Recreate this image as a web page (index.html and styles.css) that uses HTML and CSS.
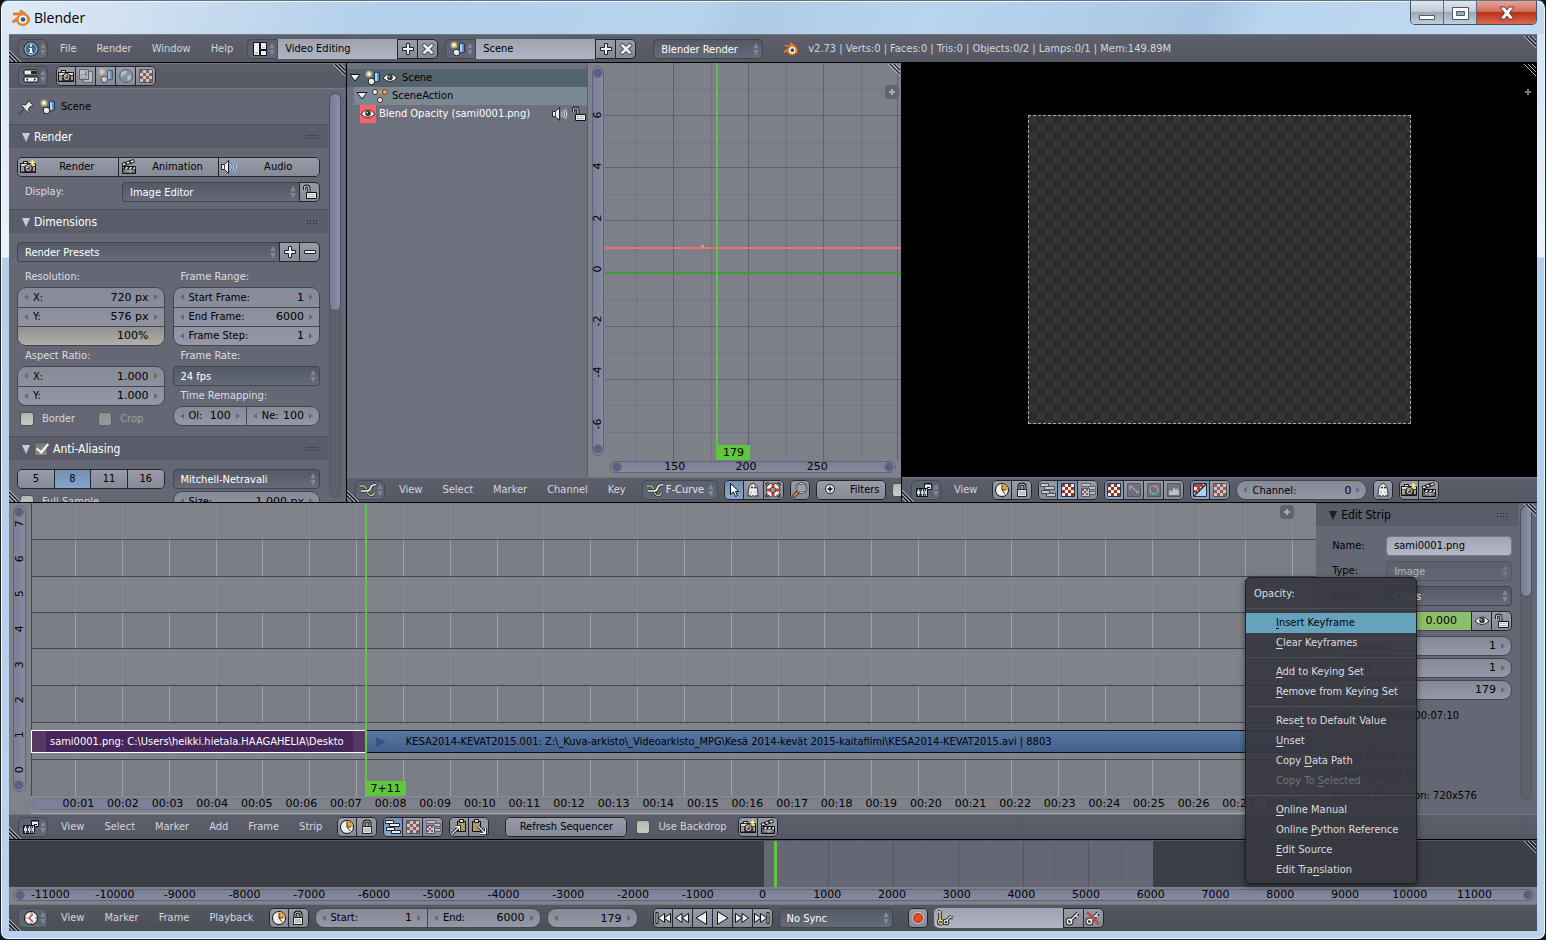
FILE: index.html
```html
<!DOCTYPE html>
<html lang="en">
<head>
<meta charset="utf-8">
<title>Blender</title>
<link rel="stylesheet" href="styles.css">
</head>
<body>
<svg class="defs" aria-hidden="true">
  <symbol id="ud" viewBox="0 0 8 16"><path d="M4 1L7 7H1zM4 15L1 9H7z" fill="#858996"/></symbol>
  <symbol id="plus" viewBox="0 0 16 16"><path d="M6.500 2.500h3v4h4v3h-4v4h-3v-4h-4v-3h4z" fill="#eee" stroke="#222"/></symbol>
  <symbol id="minus" viewBox="0 0 16 16"><path d="M2.500 6.500h11v3h-11z" fill="#eee" stroke="#222"/></symbol>
  <symbol id="cross" viewBox="0 0 16 16"><path d="M2 4.500L4.500 2 8 5.500 11.500 2 14 4.500 10.500 8l3.500 3.500-2.500 2.500L8 10.500 4.500 14 2 11.500 5.500 8z" fill="#eee" stroke="#222"/></symbol>
  <symbol id="info" viewBox="0 0 16 16"><circle cx="8" cy="8" r="7" fill="#456890" stroke="#111"/><circle cx="8" cy="8" r="6" fill="none" stroke="#c5d8ea"/><path d="M7 3.500h2v2H7zM6 7h3v4h1v1H6v-1h1V8H6z" fill="#fff"/></symbol>
  <symbol id="layout" viewBox="0 0 16 16"><path d="M1.500 1.500h6v13h-6zM8.500 1.500h6v7h-6zM8.500 9.500h6v5h-6z" fill="#eee" stroke="#111"/><path d="M3 11h3v2H3zM10 6h3v1h-3z" fill="#bbb"/></symbol>
  <symbol id="scene" viewBox="0 0 16 16"><circle cx="4" cy="4" r="3.500" fill="#e8e08a" opacity=".6"/><circle cx="4" cy="4" r="1.800" fill="#fffbd0"/><path d="M9.500 3l2.500-1 2.500 1v8l-2.500 1-2.500-1z" fill="#5a8fd0" stroke="#1d3350"/><path d="M10 3.500l2-.8v8.500l-2-.7z" fill="#b5d2f2"/><circle cx="6.500" cy="11.500" r="3.300" fill="#e4e4e4" stroke="#222"/><circle cx="5.500" cy="10.500" r="1.200" fill="#fff"/></symbol>
  <symbol id="blender" viewBox="0 0 20 16"><path d="M2 11.500L10 5H3.500V3h8L9.500 1.200 11.500 0l6.500 5.500C21.500 9.500 18.500 15.500 13 15.500c-4 0-6.300-2.500-6.300-5L3.500 13z" fill="#f0862a" stroke="#b85f18" stroke-width=".6"/><circle cx="12.800" cy="9.500" r="4" fill="#fff"/><circle cx="13" cy="9.500" r="2.300" fill="#265787"/></symbol>
  <symbol id="props" viewBox="0 0 16 16"><rect x="1" y="2" width="14" height="5" rx="1" fill="#eee" stroke="#111"/><path d="M8 3h6v3H8z" fill="#222"/><rect x="1" y="9" width="14" height="5" rx="1" fill="#eee" stroke="#111"/><path d="M3 11.500l2-1.500v3zM13 11.500l-2-1.500v3z" fill="#222"/></symbol>
  <symbol id="camera" viewBox="0 0 16 16"><path d="M.500 4.500h3v-2h4v2h8v9H.500z" fill="#3a3634" stroke="#111"/><path d="M1 5h14v2H1z" fill="#ddd"/><path d="M4 3h3v1H4z" fill="#eee"/><path d="M1 7.500h3v5H1zM13 8h2v4h-2z" fill="#a99e90"/><circle cx="8.500" cy="9" r="3.600" fill="#ccc" stroke="#111"/><circle cx="8.500" cy="9" r="2" fill="#5b3e42"/><circle cx="7.700" cy="8.300" r=".8" fill="#fff"/></symbol>
  <symbol id="render" viewBox="0 0 16 16"><use href="#camera"/><path d="M12.500 0l1 2.500L16 3.500l-2.500 1-1 3-1-3-2.500-1 2.500-1z" fill="#fff3a0" stroke="#d8b92c" stroke-width=".5"/></symbol>
  <symbol id="clapper" viewBox="0 0 16 16"><path d="M1.500 7.500h13v7h-13z" fill="#666" stroke="#111"/><path d="M2 8h12v2H2z" fill="#eee"/><path d="M3 8h2l-1 2H2zM7 8h2l-1 2H6zM11 8h2l-1 2h-2z" fill="#111"/><path d="M1 4.500L12.500.500l1 2.500L2 7z" fill="#eee" stroke="#111"/><path d="M4 3.500l2 2M8 2l2 2" stroke="#111" stroke-width="1.500"/><path d="M4 12h8M9 11v3" stroke="#bbb"/></symbol>
  <symbol id="audio" viewBox="0 0 16 16"><path d="M.500 5.500h3l4-4v13l-4-4h-3z" fill="#eee" stroke="#222"/><path d="M3.500 5.500v5" stroke="#444"/><path d="M9.500 5q1.800 3 0 6M11.500 3.500q3 4.500 0 9M13.500 2q4 6 0 12" fill="none" stroke="#4a78a8" stroke-width="1.800"/><path d="M9.500 5q1.800 3 0 6M11.500 3.500q3 4.500 0 9M13.500 2q4 6 0 12" fill="none" stroke="#b8d8f6"/></symbol>
  <symbol id="speaker" viewBox="0 0 16 16"><path d="M.500 5.500h3l4-4v13l-4-4h-3z" fill="#eee" stroke="#222"/><path d="M3.500 5.500v5" stroke="#444"/><path d="M9.500 5.500q1.500 2.500 0 5M11.500 4q2.500 4 0 8M13.500 3q3 5 0 10" fill="none" stroke="#ddd"/></symbol>
  <symbol id="layers" viewBox="0 0 16 16"><path d="M5.500 3.500h9v11h-9z" fill="#d8d5cf" stroke="#555"/><path d="M1.500 1.500h9v10h-9z" fill="#cfd3dc" stroke="#444"/><circle cx="4" cy="4" r="1.500" fill="#f0ea9a"/><path d="M7 3h2v5H7z" fill="#5c8cc2"/><circle cx="5.500" cy="8.500" r="2" fill="#eee" stroke="#444" stroke-width=".5"/></symbol>
  <symbol id="world" viewBox="0 0 16 16"><circle cx="8" cy="8" r="6.500" fill="#7393ac" stroke="#3a4450"/><path d="M3 5q3-3 6-2l-1 3-3 1-1 3zM9 8l4-1q1 4-3 6z" fill="#d5e0d2"/></symbol>
  <symbol id="texture" viewBox="0 0 16 16"><path d="M1.500 1.500h13v13h-13z" fill="#f2ece8" stroke="#333"/><path d="M2 2h3v3H2zM8 2h3v3H8zM5 5h3v3H5zM11 5h3v3h-3zM2 8h3v3H2zM8 8h3v3H8zM5 11h3v3H5zM11 11h3v3h-3z" fill="#92352d"/></symbol>
  <symbol id="alpha" viewBox="0 0 16 16"><use href="#texture"/><path d="M14 2v12H2z" fill="#a7d0ee"/><path d="M2 2h10L2 12z" fill="#f2ece8"/><path d="M2 2h3v3H2zM8 2h3v3H8zM5 5h3v3H5zM2 8h3v3H2z" fill="#c0392b"/><path d="M5 2h3v3H5z" fill="#3974a8"/><path d="M2 14L14 2" stroke="#222" stroke-width="1.500"/></symbol>
  <symbol id="pin" viewBox="0 0 16 16"><path d="M9 1.500l5.500 5-1.500 1-1-.5-2.500 3 .5 2.500-1 1-3-3L2 14.500l-1 .5.500-1.500 4-4-3-3 1-1 3 .5 2.500-3-.5-1z" fill="#e6e6e6" stroke="#222"/></symbol>
  <symbol id="eye" viewBox="0 0 16 16"><path d="M1 8q7-8 14 0-7 7-14 0z" fill="#fff" stroke="#222"/><circle cx="8" cy="7.500" r="2.800" fill="#333"/><circle cx="7.300" cy="6.800" r=".8" fill="#fff"/></symbol>
  <symbol id="unlock" viewBox="0 0 16 16"><path d="M2.500 6V3.500q0-1.500 2.200-1.500t2.200 1.500V8" fill="none" stroke="#111" stroke-width="3"/><path d="M2.500 6V3.500q0-1.500 2.200-1.500t2.200 1.500V8" fill="none" stroke="#ccc" stroke-width="1.200"/><path d="M4.500 8.500h10v6h-10z" fill="#eee" stroke="#111"/><path d="M6 10.500h2M9 10.500h2M12 10.500h1M6 12.500h7" stroke="#aaa"/></symbol>
  <symbol id="lock" viewBox="0 0 16 16"><path d="M5 8V4.500Q5 2 8 2t3 2.500V8" fill="none" stroke="#111" stroke-width="3"/><path d="M5 8V4.500Q5 2 8 2t3 2.500V8" fill="none" stroke="#ccc"/><path d="M3.500 7.500h9v7h-9z" fill="#e5e5e5" stroke="#222"/><path d="M5 10h6M5 12h6" stroke="#999"/></symbol>
  <symbol id="action" viewBox="0 0 16 16"><path d="M3 4h10L8 11z" fill="none" stroke="#b8794a"/><circle cx="8" cy="4" r="2" fill="#d39865"/><circle cx="3" cy="4" r="2.500" fill="#eee" stroke="#333"/><circle cx="13" cy="4" r="2.500" fill="#e8a56d" stroke="#6c4425"/><circle cx="8" cy="12" r="2.500" fill="#eee" stroke="#333"/></symbol>
  <symbol id="fcurve" viewBox="0 0 16 16"><path d="M0 4h3q3 0 3.500 4t4 5.500q3 .5 4-2.500" fill="none" stroke="#222" stroke-width="2.600"/><path d="M0 4h3q3 0 3.500 4t4 5.500q3 .5 4-2.500" fill="none" stroke="#a4d49e" stroke-width="1.400"/><path d="M1 9h5q4 0 4.500-3T16 2.500" fill="none" stroke="#222" stroke-width="3"/><path d="M1 9h5q4 0 4.500-3T16 2.500" fill="none" stroke="#f2f2f2" stroke-width="1.700"/></symbol>
  <symbol id="cursor" viewBox="0 0 16 16"><path d="M4.500 1.500v11l3-2.500 2 4.500 2-1-2-4h3.500z" fill="#fff" stroke="#111"/></symbol>
  <symbol id="ghost" viewBox="0 0 16 16"><path d="M3 14.500q0-13 5-13t5 13l-2-1-1.500 1-1.500-1-1.500 1-1.500-1z" fill="#eee" stroke="#333"/><circle cx="7" cy="5.500" r="1" fill="#222"/><circle cx="10" cy="5.500" r="1" fill="#222"/><path d="M6 9v3M10 9v2" stroke="#aaa"/></symbol>
  <symbol id="buoy" viewBox="0 0 16 16"><circle cx="8" cy="8" r="4.800" fill="none" stroke="#222" stroke-width="5"/><circle cx="8" cy="8" r="4.800" fill="none" stroke="#f4f4f4" stroke-width="3.500"/><path d="M6.500 1.500h3v4h-3zM6.500 10.500h3v4h-3zM1.500 6.500h4v3h-4zM10.500 6.500h4v3h-4z" fill="#c5392e"/><path d="M1 4V1h3M12 1h3v3M1 12v3h3M12 15h3v-3" fill="none" stroke="#222"/></symbol>
  <symbol id="lens" viewBox="0 0 16 16"><path d="M7 9l-5 5" stroke="#3a1c10" stroke-width="3.500" stroke-linecap="round"/><path d="M7 9l-5 5" stroke="#d8875f" stroke-width="1.800" stroke-linecap="round"/><circle cx="9.500" cy="6" r="4.800" fill="#9aa0a8" stroke="#222" stroke-width="2"/><circle cx="9.500" cy="6" r="4.600" fill="none" stroke="#ddd"/></symbol>
  <symbol id="zoomin" viewBox="0 0 16 16"><circle cx="8" cy="7" r="4.500" fill="#eee" stroke="#222"/><path d="M8 4.500v5M5.500 7h5" stroke="#111" stroke-width="1.500"/></symbol>
  <symbol id="seq" viewBox="0 0 16 16"><path d="M8.500 1.500h7v6h-7z" fill="#e8eef5" stroke="#111"/><path d="M10 1v2M12 1v2M14 1v2M11 5.500h3" stroke="#111"/><path d="M.500 6.500h11v8H.500z" fill="#c8dced" stroke="#111"/><path d="M1 8h10M1 13h10" stroke="#111" stroke-width="1.500" stroke-dasharray="1 1"/><path d="M4.500 7v7M8 7v7" stroke="#333"/></symbol>
  <symbol id="pie" viewBox="0 0 16 16"><circle cx="8" cy="8" r="6.500" fill="#f3f0ea" stroke="#111"/><path d="M8 8V2q6 0 6 6z" fill="#f0a32c"/><path d="M8 8v-5M8 8h4M8 8l3 4" stroke="#333" fill="none"/></symbol>
  <symbol id="bars" viewBox="0 0 16 16"><path d="M.500 1.500h8v3h-8zM4.500 4.500h10v3h-10zM1.500 8.500h8v3h-8zM6.500 11.500h9v3h-9z" fill="#e8eef2" stroke="#222"/></symbol>
  <symbol id="both" viewBox="0 0 16 16"><path d="M1.500 1.500h9v3h-9zM8.500 4.500h7v3h-7zM9.500 9.500h6v3h-6z" fill="#ddd" stroke="#444"/><path d="M1.500 6.500h8v8h-8z" fill="#eee" stroke="#333"/><path d="M2 7h2v2H2zM6 7h2v2H6zM4 9h2v2H4zM2 11h2v2H2zM6 11h2v2H6z" fill="#835"/></symbol>
  <symbol id="wave" viewBox="0 0 16 16"><path d="M1.500 1.500h13v13h-13z" fill="#5a5d66" stroke="#333"/><path d="M3 4q3 0 5 3t5 3M4 5v3M10 10h2" fill="none" stroke="#ddd"/></symbol>
  <symbol id="chroma" viewBox="0 0 16 16"><path d="M1.500 1.500h13v13h-13z" fill="#5a5d66" stroke="#333"/><path d="M4 8a4 4 0 0 1 4-4" fill="none" stroke="#e55" stroke-width="1.500"/><path d="M8 4a4 4 0 0 1 4 4" fill="none" stroke="#d96" stroke-width="1.500"/><path d="M12 8a4 4 0 0 1-4 4" fill="none" stroke="#5c8" stroke-width="1.500"/><path d="M8 12a4 4 0 0 1-4-4" fill="none" stroke="#6ce" stroke-width="1.500"/></symbol>
  <symbol id="hist" viewBox="0 0 16 16"><path d="M1.500 1.500h13v13h-13z" fill="#5a5d66" stroke="#333"/><path d="M3 13V9l2-1 1 2 2-5 2 3 1-2 2 3v4z" fill="#ddd"/></symbol>
  <symbol id="copy" viewBox="0 0 16 16"><path d="M6.500 2.500h8v10h-8z" fill="#aa9a6c" stroke="#111"/><path d="M8.500.500h4v3h-4z" fill="#ddd" stroke="#111"/><path d="M1 15l6-6M4 7.500h4.500V12" fill="none" stroke="#111" stroke-width="3"/><path d="M1 15l7-7M4 7.500h4.500V12" fill="none" stroke="#fff" stroke-width="1.300"/></symbol>
  <symbol id="paste" viewBox="0 0 16 16"><path d="M1.500 2.500h8v10h-8z" fill="#aa9a6c" stroke="#111"/><path d="M3.500.500h4v3h-4z" fill="#ddd" stroke="#111"/><path d="M7 7l6 6M9 14.500h5.500V9" fill="none" stroke="#111" stroke-width="3"/><path d="M7 7l7 7M9 14.500h5.500V9" fill="none" stroke="#fff" stroke-width="1.300"/></symbol>
  <symbol id="clock" viewBox="0 0 16 16"><circle cx="8" cy="8" r="6.500" fill="#eee" stroke="#111"/><path d="M10 4L6 8l4 4" fill="none" stroke="#c33" stroke-width="1.300"/><path d="M8 2v2M8 12v2M2 8h2M12 8h2" stroke="#777"/></symbol>
  <symbol id="play" viewBox="0 0 16 16"><path d="M3.500 1.500L14 8 3.500 14.500z" fill="#eee" stroke="#111"/></symbol>
  <symbol id="next" viewBox="0 0 16 16"><path d="M1.500 3.500L8 8l-6.500 4.500zM8 3.500L14.500 8 8 12.500z" fill="#eee" stroke="#111"/></symbol>
  <symbol id="end" viewBox="0 0 16 16"><path d="M.500 3.500L7 8 .500 12.500zM6.500 3.500L13 8l-6.500 4.500zM13 2.500h2v11h-2z" fill="#eee" stroke="#111"/></symbol>
  <symbol id="rec" viewBox="0 0 16 16"><circle cx="8" cy="8" r="4.500" fill="#ee4a1c" stroke="#a52a10"/><circle cx="8" cy="8" r="5.500" fill="none" stroke="#eee" stroke-width=".6"/></symbol>
  <symbol id="key" viewBox="0 0 16 16"><path d="M5 11l8-8M10.500 5.500l2.500 1.500" stroke="#222" stroke-width="3.500"/><circle cx="4.500" cy="11.500" r="2.200" fill="none" stroke="#222" stroke-width="3.500"/><path d="M5 11l8-8M10.500 5.500l2.500 1.500" stroke="#eee" stroke-width="1.500"/><circle cx="4.500" cy="11.500" r="2.200" fill="none" stroke="#eee" stroke-width="1.500"/></symbol>
  <symbol id="keydel" viewBox="0 0 16 16"><use href="#key"/><path d="M2 2l12 12" stroke="#c4454c" stroke-width="2.500"/></symbol>
  <symbol id="keys" viewBox="0 0 20 16"><path d="M4 1v10M4 2H2" stroke="#222" stroke-width="3.500"/><circle cx="4.500" cy="12" r="2" fill="none" stroke="#222" stroke-width="3"/><path d="M4 1v10M4 2H2" stroke="#e8d98a" stroke-width="1.500"/><circle cx="4.500" cy="12" r="2" fill="none" stroke="#e8d98a" stroke-width="1.300"/><path d="M10 11l5-5M14 7l3 1" stroke="#222" stroke-width="3"/><circle cx="10" cy="12" r="1.800" fill="none" stroke="#222" stroke-width="3"/><path d="M10 11l5-5M14 7l3 1" stroke="#ddd" stroke-width="1.300"/><circle cx="10" cy="12" r="1.800" fill="none" stroke="#ddd" stroke-width="1.200"/></symbol>
  <symbol id="hatch" viewBox="0 0 12 12"><path d="M0 0l12 12M4 0l8 8M8 0l4 4" stroke="#b4b6be"/><path d="M2 0l10 10M6 0l6 6" stroke="#17181c"/></symbol>
  <symbol id="grip" viewBox="0 0 12 6"><path d="M1 1h1v1H1zM4 1h1v1H4zM7 1h1v1H7zM10 1h1v1h-1zM1 4h1v1H1zM4 4h1v1H4zM7 4h1v1H7zM10 4h1v1h-1z" fill="#1c1d22"/></symbol>
  <symbol id="tri" viewBox="0 0 10 10"><path d="M1 1h8L5 10z" fill="currentColor"/></symbol>
  <symbol id="tree" viewBox="0 0 12 10"><path d="M1 1.500h10L6 8z" fill="#eee" stroke="#111"/></symbol>
</svg>

<div class="window">
  <header class="titlebar">
    <svg class="logo"><use href="#blender"/></svg>
    <h1>Blender</h1>
    <div class="winbtns">
      <button aria-label="Minimize"><svg viewBox="0 0 20 16"><path d="M2.500 10.500h15v4h-15z" fill="#fff" stroke="#535666"/></svg></button>
      <button aria-label="Maximize"><svg viewBox="0 0 20 16"><path d="M2.500 2.500h16v12h-16zM6.500 6.500h8v4h-8z" fill="#fff" fill-rule="evenodd" stroke="#535666"/></svg></button>
      <button class="close" aria-label="Close"><svg viewBox="0 0 20 16"><path d="M3 2h5l2 3 2-3h5l-4.500 6 4.500 6h-5l-2-3-2 3H3l4.500-6z" fill="#fff" stroke="#6b3030"/></svg></button>
    </div>
  </header>

  <main class="app">
    <header class="bar info">
      <svg class="hatch tr"><use href="#hatch"/></svg><svg class="hatch bl"><use href="#hatch"/></svg>
      <button class="editor" aria-label="Info editor"><svg class="i"><use href="#info"/></svg><svg class="ud"><use href="#ud"/></svg></button>
      <nav class="menus"><button>File</button><button>Render</button><button>Window</button><button>Help</button></nav>
      <div class="idbox">
        <button class="editor" aria-label="Screen layout"><svg class="i"><use href="#layout"/></svg><svg class="ud"><use href="#ud"/></svg></button>
        <input aria-label="Screen" value="Video Editing"><button class="tool" aria-label="Add screen"><svg class="i"><use href="#plus"/></svg></button><button class="tool" aria-label="Delete screen"><svg class="i"><use href="#cross"/></svg></button>
      </div>
      <div class="idbox">
        <button class="editor" aria-label="Scene list"><svg class="i"><use href="#scene"/></svg><svg class="ud"><use href="#ud"/></svg></button>
        <input aria-label="Scene" value="Scene"><button class="tool" aria-label="Add scene"><svg class="i"><use href="#plus"/></svg></button><button class="tool" aria-label="Delete scene"><svg class="i"><use href="#cross"/></svg></button>
      </div>
      <span class="dd engine"><select aria-label="Render engine"><option>Blender Render</option></select><svg class="ud"><use href="#ud"/></svg></span>
      <p class="stats"><svg class="i"><use href="#blender"/></svg>v2.73 | Verts:0 | Faces:0 | Tris:0 | Objects:0/2 | Lamps:0/1 | Mem:149.89M</p>
    </header>

    <div class="upper">
      <section class="area props">
        <svg class="hatch tr"><use href="#hatch"/></svg>
        <div class="bar">
          <button class="editor" aria-label="Properties editor"><svg class="i"><use href="#props"/></svg><svg class="ud"><use href="#ud"/></svg></button>
          <div class="group tabs"><button class="tool" aria-label="Render"><svg class="i"><use href="#camera"/></svg></button><button class="tool off" aria-label="Render layers"><svg class="i"><use href="#layers"/></svg></button><button class="tool off" aria-label="Scene"><svg class="i"><use href="#scene"/></svg></button><button class="tool off" aria-label="World"><svg class="i"><use href="#world"/></svg></button><button class="tool off" aria-label="Texture"><svg class="i"><use href="#texture"/></svg></button></div>
        </div>
        <div class="scroller">
          <div class="panels">
            <div class="context"><svg class="i"><use href="#pin"/></svg><svg class="i"><use href="#scene"/></svg>Scene</div>
            <h2><svg class="tri"><use href="#tri"/></svg>Render<svg class="grip"><use href="#grip"/></svg></h2>
            <div class="body">
              <div class="group wide"><button class="tool"><svg class="i"><use href="#render"/></svg><span>Render</span></button><button class="tool"><svg class="i"><use href="#clapper"/></svg><span>Animation</span></button><button class="tool"><svg class="i"><use href="#audio"/></svg><span>Audio</span></button></div>
              <div class="display"><label for="disp">Display:</label><span class="dd joined"><select id="disp"><option>Image Editor</option></select><svg class="ud"><use href="#ud"/></svg></span><button class="tool last" aria-label="Lock interface"><svg class="i"><use href="#unlock"/></svg></button></div>
            </div>
            <h2><svg class="tri"><use href="#tri"/></svg>Dimensions<svg class="grip"><use href="#grip"/></svg></h2>
            <div class="body dims">
              <div class="presets"><span class="dd joined"><select aria-label="Render presets"><option>Render Presets</option></select><svg class="ud"><use href="#ud"/></svg></span><button class="tool" aria-label="Add preset"><svg class="i"><use href="#plus"/></svg></button><button class="tool last" aria-label="Remove preset"><svg class="i"><use href="#minus"/></svg></button></div>
              <div class="cols">
                <div class="col">
                  <p>Resolution:</p>
                  <div class="stack"><label class="num"><span>X:</span><input value="720 px"></label><label class="num"><span>Y:</span><input value="576 px"></label><label class="num slider"><input aria-label="Resolution percentage" value="100%"></label></div>
                  <p>Aspect Ratio:</p>
                  <div class="stack"><label class="num"><span>X:</span><input value="1.000"></label><label class="num"><span>Y:</span><input value="1.000"></label></div>
                  <div class="checks"><label class="check"><input type="checkbox">Border</label><label class="check dim"><input type="checkbox" disabled>Crop</label></div>
                </div>
                <div class="col">
                  <p>Frame Range:</p>
                  <div class="stack"><label class="num"><span>Start Frame:</span><input value="1"></label><label class="num"><span>End Frame:</span><input value="6000"></label><label class="num"><span>Frame Step:</span><input value="1"></label></div>
                  <p><label for="fps">Frame Rate:</label></p>
                  <span class="dd"><select id="fps"><option>24 fps</option></select><svg class="ud"><use href="#ud"/></svg></span>
                  <p>Time Remapping:</p>
                  <div class="stack pair"><label class="num"><span>Ol:</span><input value="100"></label><label class="num"><span>Ne:</span><input value="100"></label></div>
                </div>
              </div>
            </div>
            <h2><svg class="tri"><use href="#tri"/></svg><input class="aa" type="checkbox" checked aria-label="Anti-Aliasing">Anti-Aliasing<svg class="grip"><use href="#grip"/></svg></h2>
            <div class="body cols">
              <div class="col">
                <div class="group wide samples"><button class="tool">5</button><button class="tool on">8</button><button class="tool">11</button><button class="tool">16</button></div>
                <div class="checks"><label class="check"><input type="checkbox">Full Sample</label></div>
              </div>
              <div class="col gap">
                <span class="dd"><select aria-label="Filter"><option>Mitchell-Netravali</option></select><svg class="ud"><use href="#ud"/></svg></span>
                <div class="stack"><label class="num"><span>Size:</span><input value="1.000 px"></label></div>
              </div>
            </div>
          </div>
          <div class="track"><div class="thumb"></div></div>
        </div>
        <svg class="hatch bl"><use href="#hatch"/></svg>
      </section>

      <section class="area graph">
        <div class="graphmain">
          <div class="channels">
            <div class="ch scene"><svg class="tree"><use href="#tree"/></svg><svg class="i"><use href="#scene"/></svg><svg class="i"><use href="#eye"/></svg>Scene</div>
            <div class="ch act"><svg class="tree"><use href="#tree"/></svg><svg class="i"><use href="#action"/></svg>SceneAction</div>
            <div class="ch curve"><span class="swatch"><svg class="i"><use href="#eye"/></svg></span><span class="name">Blend Opacity (sami0001.png)</span><svg class="i"><use href="#speaker"/></svg><svg class="i"><use href="#unlock"/></svg></div>
          </div>
          <div class="vruler"><div class="pill"><span>6</span><span>4</span><span>2</span><span>0</span><span>-2</span><span>-4</span><span>-6</span></div></div>
          <div class="plotcol">
            <div class="plot">
              <svg class="grid" viewBox="0 0 297 395" preserveAspectRatio="none">
                <path class="minor" d="M32 0V395M107 0V395M182 0V395M257 0V395M0 26H297M0 79H297M0 131H297M0 236H297M0 289H297M0 341H297M0 368H297"/>
                <path class="major" d="M69 0V395M144 0V395M219 0V395M294 0V395M0 52H297M0 104H297M0 157H297M0 262H297M0 315H297"/>
                <path class="zero" d="M0 209H297"/>
                <path class="fc" d="M0 184H297"/><path d="M96 183h3" stroke="#f0962c" stroke-width="3"/>
                <path class="now" d="M112 0V395"/>
              </svg>
              <span class="frame">179</span>
              <span class="expand"><svg viewBox="0 0 14 14"><path d="M7 4v6M4 7h6" stroke="#a9abb2" stroke-width="2"/></svg></span>
            </div>
            <div class="hruler"><div class="pill"><span>150</span><span>200</span><span>250</span></div></div>
          </div>
          <svg class="hatch tr"><use href="#hatch"/></svg>
        </div>
        <div class="bar">
          <svg class="hatch bl"><use href="#hatch"/></svg>
          <button class="editor" aria-label="Graph editor"><svg class="i"><use href="#fcurve"/></svg><svg class="ud"><use href="#ud"/></svg></button>
          <nav class="menus"><button>View</button><button>Select</button><button>Marker</button><button>Channel</button><button>Key</button></nav>
          <button class="editor mode"><svg class="i"><use href="#fcurve"/></svg>F-Curve<svg class="ud"><use href="#ud"/></svg></button>
          <div class="group"><button class="tool on" aria-label="Only selected"><svg class="i"><use href="#cursor"/></svg></button><button class="tool" aria-label="Show hidden"><svg class="i"><use href="#ghost"/></svg></button><button class="tool" aria-label="Only errors"><svg class="i"><use href="#buoy"/></svg></button></div>
          <div class="group"><button class="tool" aria-label="Search"><svg class="i"><use href="#lens"/></svg></button></div>
          <div class="group"><button class="tool filters"><svg class="i"><use href="#zoomin"/></svg><span>Filters</span></button></div>
          <input class="cut" type="checkbox" aria-label="Normalize">
        </div>
      </section>

      <section class="area preview">
        <svg class="hatch tr"><use href="#hatch"/></svg>
        <div class="canvas"><div class="checker"></div><span class="expand"><svg viewBox="0 0 14 14"><path d="M7 4v6M4 7h6" stroke="#777" stroke-width="2"/></svg></span></div>
        <div class="bar">
          <svg class="hatch bl"><use href="#hatch"/></svg>
          <button class="editor" aria-label="Sequence editor"><svg class="i"><use href="#seq"/></svg><svg class="ud"><use href="#ud"/></svg></button>
          <nav class="menus"><button>View</button></nav>
          <div class="group"><button class="tool" aria-label="Auto range"><svg class="i"><use href="#pie"/></svg></button><button class="tool" aria-label="Lock time"><svg class="i"><use href="#lock"/></svg></button></div>
          <div class="group"><button class="tool off" aria-label="Sequencer"><svg class="i"><use href="#bars"/></svg></button><button class="tool on" aria-label="Preview"><svg class="i"><use href="#texture"/></svg></button><button class="tool off" aria-label="Both"><svg class="i"><use href="#both"/></svg></button></div>
          <div class="group"><button class="tool on" aria-label="Image"><svg class="i"><use href="#texture"/></svg></button><button class="tool off" aria-label="Waveform"><svg class="i"><use href="#wave"/></svg></button><button class="tool off" aria-label="Vectorscope"><svg class="i"><use href="#chroma"/></svg></button><button class="tool off" aria-label="Histogram"><svg class="i"><use href="#hist"/></svg></button></div>
          <div class="group"><button class="tool on" aria-label="Color and alpha"><svg class="i"><use href="#alpha"/></svg></button><button class="tool off" aria-label="Color"><svg class="i"><use href="#texture"/></svg></button></div>
          <div class="stack channel"><label class="num"><span>Channel:</span><input value="0"></label></div>
          <div class="group"><button class="tool" aria-label="Onion skin"><svg class="i"><use href="#ghost"/></svg></button></div>
          <div class="group"><button class="tool" aria-label="Render image"><svg class="i"><use href="#render"/></svg></button><button class="tool" aria-label="Render animation"><svg class="i"><use href="#clapper"/></svg></button></div>
        </div>
      </section>
    </div>

    <section class="area sequencer">
      <div class="seqmain">
        <div class="vruler"><div class="pill"><span>7</span><span>6</span><span>5</span><span>4</span><span>3</span><span>2</span><span>1</span><span>0</span></div></div>
        <div class="plotcol">
          <div class="plot">
            <svg class="grid" viewBox="0 0 1286 293" preserveAspectRatio="none">
              <path class="secs" d="M45 0V293M92 0V293M139 0V293M186 0V293M232 0V293M279 0V293M326 0V293M373 0V293M420 0V293M467 0V293M513 0V293M560 0V293M607 0V293M654 0V293M701 0V293M748 0V293M794 0V293M841 0V293M888 0V293M935 0V293M981 0V293M1028 0V293M1075 0V293M1122 0V293M1169 0V293M1215 0V293M1262 0V293"/>
              <path d="M0 0H1286V36H0zM0 73H1286V109H0zM0 145H1286V182H0zM0 219H1286V256H0z" fill="#82848c" opacity=".85"/>
              <path class="rows" d="M0 36H1286M0 73H1286M0 109H1286M0 145H1286M0 182H1286M0 219H1286M0 256H1286M0 0V293"/>
            </svg>
            <div class="strips">
              <div class="strip image">sami0001.png: C:\Users\heikki.hietala.HAAGAHELIA\Deskto</div>
              <div class="strip movie"><svg viewBox="0 0 10 10"><path d="M0 0l10 5-10 5z" fill="#35527a"/></svg>KESA2014-KEVAT2015.001: Z:\_Kuva-arkisto\_Videoarkisto_MPG\Kesä 2014-kevät 2015-kaitafilmi\KESA2014-KEVAT2015.avi | 8803</div>
            </div>
            <div class="playhead"><span class="frame">7+11</span></div>
            <span class="expand"><svg viewBox="0 0 14 14"><path d="M7 4v6M4 7h6" stroke="#a9abb2" stroke-width="2"/></svg></span>
          </div>
          <div class="hruler"><div class="pill"><span>00:01</span><span>00:02</span><span>00:03</span><span>00:04</span><span>00:05</span><span>00:06</span><span>00:07</span><span>00:08</span><span>00:09</span><span>00:10</span><span>00:11</span><span>00:12</span><span>00:13</span><span>00:14</span><span>00:15</span><span>00:16</span><span>00:17</span><span>00:18</span><span>00:19</span><span>00:20</span><span>00:21</span><span>00:22</span><span>00:23</span><span>00:24</span><span>00:25</span><span>00:26</span><span>00:27</span><span>00:28</span></div></div>
        </div>
        <aside class="side">
          <div class="panels">
            <h2><svg class="tri"><use href="#tri"/></svg>Edit Strip<svg class="grip"><use href="#grip"/></svg></h2>
            <div class="fields">
              <label for="nm">Name:</label><input id="nm" class="text" value="sami0001.png">
              <label for="ty">Type:</label><span class="dd dim"><select id="ty" disabled><option>Image</option></select><svg class="ud"><use href="#ud"/></svg></span>
              <label for="bl">Blend:</label><span class="dd"><select id="bl"><option>Cross</option></select><svg class="ud"><use href="#ud"/></svg></span>
              <div class="opacity"><input aria-label="Opacity" value="0.000"><button class="tool" aria-label="Mute"><svg class="i"><use href="#eye"/></svg></button><button class="tool last" aria-label="Lock strip"><svg class="i"><use href="#unlock"/></svg></button></div>
              <div class="stack"><label class="num"><span>Channel:</span><input value="1"></label></div>
              <div class="stack"><label class="num"><span>Start Frame:</span><input value="1"></label></div>
              <div class="stack"><label class="num"><span>Length:</span><input value="179"></label></div>
            </div>
            <div class="facts"><p>Final Length: 00:00:07:10</p><p class="skip">Image Offset 0:0</p><p>Frame Still 0:178</p><p>Original Dimension: 720x576</p></div>
          </div>
          <div class="track"><div class="thumb"></div></div>
        </aside>
        <svg class="hatch tr"><use href="#hatch"/></svg>
      </div>
      <div class="bar">
        <svg class="hatch bl"><use href="#hatch"/></svg>
        <button class="editor" aria-label="Sequence editor"><svg class="i"><use href="#seq"/></svg><svg class="ud"><use href="#ud"/></svg></button>
        <nav class="menus"><button>View</button><button>Select</button><button>Marker</button><button>Add</button><button>Frame</button><button>Strip</button></nav>
        <div class="group"><button class="tool" aria-label="Auto range"><svg class="i"><use href="#pie"/></svg></button><button class="tool" aria-label="Lock time"><svg class="i"><use href="#lock"/></svg></button></div>
        <div class="group"><button class="tool on" aria-label="Sequencer"><svg class="i"><use href="#bars"/></svg></button><button class="tool off" aria-label="Preview"><svg class="i"><use href="#texture"/></svg></button><button class="tool off" aria-label="Both"><svg class="i"><use href="#both"/></svg></button></div>
        <div class="group"><button class="tool" aria-label="Copy"><svg class="i"><use href="#copy"/></svg></button><button class="tool" aria-label="Paste"><svg class="i"><use href="#paste"/></svg></button></div>
        <div class="group refresh"><button class="tool">Refresh Sequencer</button></div>
        <label class="check"><input type="checkbox">Use Backdrop</label>
        <div class="group last"><button class="tool" aria-label="Render image"><svg class="i"><use href="#render"/></svg></button><button class="tool" aria-label="Render animation"><svg class="i"><use href="#clapper"/></svg></button></div>
      </div>
    </section>

    <section class="area timeline">
      <svg class="hatch tr"><use href="#hatch"/></svg>
      <div class="plot">
        <svg class="grid" viewBox="0 0 1529 47" preserveAspectRatio="none">
          <path d="M755 0H1145V47H755z" fill="#656874"/>
          <path class="half" d="M73 0V47M138 0V47M203 0V47M268 0V47M333 0V47M398 0V47M462 0V47M527 0V47M592 0V47M657 0V47M722 0V47M787 0V47M852 0V47M917 0V47M982 0V47M1047 0V47M1112 0V47M1177 0V47M1242 0V47M1307 0V47M1372 0V47M1437 0V47M1502 0V47"/>
          <path class="full" d="M41 0V47M106 0V47M171 0V47M236 0V47M301 0V47M366 0V47M430 0V47M495 0V47M560 0V47M625 0V47M690 0V47M755 0V47M820 0V47M885 0V47M950 0V47M1015 0V47M1080 0V47M1145 0V47M1209 0V47M1274 0V47M1339 0V47M1404 0V47M1469 0V47"/>
          <path class="now" d="M767 0V47"/>
        </svg>
      </div>
      <div class="hruler"><div class="pill"><span>-11000</span><span>-10000</span><span>-9000</span><span>-8000</span><span>-7000</span><span>-6000</span><span>-5000</span><span>-4000</span><span>-3000</span><span>-2000</span><span>-1000</span><span>0</span><span>1000</span><span>2000</span><span>3000</span><span>4000</span><span>5000</span><span>6000</span><span>7000</span><span>8000</span><span>9000</span><span>10000</span><span>11000</span></div></div>
      <div class="bar">
        <svg class="hatch bl"><use href="#hatch"/></svg>
        <button class="editor" aria-label="Timeline editor"><svg class="i"><use href="#clock"/></svg><svg class="ud"><use href="#ud"/></svg></button>
        <nav class="menus"><button>View</button><button>Marker</button><button>Frame</button><button>Playback</button></nav>
        <div class="group"><button class="tool" aria-label="Preview range"><svg class="i"><use href="#pie"/></svg></button><button class="tool" aria-label="Lock time"><svg class="i"><use href="#lock"/></svg></button></div>
        <div class="stack pair range"><label class="num"><span>Start:</span><input value="1"></label><label class="num"><span>End:</span><input value="6000"></label></div>
        <div class="stack current"><label class="num"><input aria-label="Current frame" value="179"></label></div>
        <div class="group transport"><button class="tool" aria-label="First frame"><svg class="i flip"><use href="#end"/></svg></button><button class="tool" aria-label="Previous key"><svg class="i flip"><use href="#next"/></svg></button><button class="tool" aria-label="Play backwards"><svg class="i flip"><use href="#play"/></svg></button><button class="tool" aria-label="Play"><svg class="i"><use href="#play"/></svg></button><button class="tool" aria-label="Next key"><svg class="i"><use href="#next"/></svg></button><button class="tool" aria-label="Last frame"><svg class="i"><use href="#end"/></svg></button></div>
        <span class="dd sync"><select aria-label="Sync mode"><option>No Sync</option></select><svg class="ud"><use href="#ud"/></svg></span>
        <div class="group record"><button class="tool" aria-label="Auto keying"><svg class="i"><use href="#rec"/></svg></button></div>
        <div class="keying"><svg class="i"><use href="#keys"/></svg><input aria-label="Keying set"><button class="tool" aria-label="Insert key"><svg class="i"><use href="#key"/></svg></button><button class="tool last" aria-label="Delete key"><svg class="i"><use href="#keydel"/></svg></button></div>
      </div>
    </section>
  </main>

  <div class="popup" role="menu">
    <p>Opacity:</p>
    <hr>
    <button role="menuitem" class="active"><u>I</u>nsert Keyframe</button>
    <button role="menuitem"><u>C</u>lear Keyframes</button>
    <hr>
    <button role="menuitem"><u>A</u>dd to Keying Set</button>
    <button role="menuitem"><u>R</u>emove from Keying Set</button>
    <hr>
    <button role="menuitem">Rese<u>t</u> to Default Value</button>
    <button role="menuitem"><u>U</u>nset</button>
    <button role="menuitem">Copy <u>D</u>ata Path</button>
    <button role="menuitem" disabled>Copy To <u>S</u>elected</button>
    <hr>
    <button role="menuitem"><u>O</u>nline Manual</button>
    <button role="menuitem">Online <u>P</u>ython Reference</button>
    <button role="menuitem"><u>E</u>dit Source</button>
    <button role="menuitem">Edit Tra<u>n</u>slation</button>
  </div>
</div>
</body>
</html>
```

FILE: styles.css
```css
* { box-sizing: border-box; }
body { margin: 0; background: #101318; font: 11px/20px "DejaVu Sans Condensed", "DejaVu Sans", sans-serif; color: #e6e7ea; }
button, input, select { font: inherit; color: inherit; margin: 0; padding: 0; border: 0; background: none; min-width: 0; }
select { appearance: none; }
h1, h2, p { margin: 0; font-weight: normal; }
.defs { position: absolute; width: 0; height: 0; }
.i { width: 16px; height: 16px; flex: none; display: block; }
.ud { width: 8px; height: 14px; flex: none; pointer-events: none; }
.flip { transform: scaleX(-1); }

.window { position: relative; min-height: 100vh; display: flex; flex-direction: column; padding: 0 8px 8px; border: 1px solid #1c232c; border-top-color: #5f7388; border-radius: 8px; background: linear-gradient(#d3e3f3, #eaf2fa 256px, #b4cfea 257px, #b9d3ee); box-shadow: inset 0 0 0 1px #f4f9fd; }
.titlebar { display: flex; align-items: center; height: 33px; gap: 4px; margin: 0 -7px; padding-left: 8px; background: linear-gradient(110deg, #dfeaf5 0, #c4d9ee 15%, #b2cfeb 25%, #b8d3ee 45%, #aecbe6 48%, #b9d4ef 60%, #a9c7e4 78%, #bad5f0 82%, #c3daf1); border-radius: 7px 7px 0 0; box-shadow: inset 0 1px 0 #eef6fd; }
.titlebar h1 { font: 14px/20px "Open Sans", sans-serif; color: #000; flex: 1; }
.logo { width: 20px; height: 16px; }
.winbtns { align-self: flex-start; display: flex; margin-right: 7px; border: 1px solid #47525e; border-top: 0; border-radius: 0 0 5px 5px; overflow: hidden; }
.winbtns button { width: 33px; height: 23px; display: grid; place-items: center; border-right: 1px solid #5e6a78; background: linear-gradient(#dfe7ee, #c2ccd6 45%, #9aa8b7 50%, #c0cfdd); }
.winbtns svg { width: 20px; height: 16px; }
.winbtns .close { width: 59px; border: 0; background: linear-gradient(#e6a596, #d2705c 45%, #b8301c 50%, #dc6a4a); }

.app { flex: 1; display: grid; grid-template-rows: auto 439fr 336fr auto; gap: 1px; background: #000; min-width: 0; }
.area { position: relative; min-width: 0; min-height: 0; }
.bar { position: relative; display: flex; align-items: center; gap: 7px; height: 25px; padding: 0 9px; overflow: hidden; background: linear-gradient(#5d606c, #555863); border-top: 1px solid #747783; white-space: nowrap; }
.info { height: 28px; }
.hatch { position: absolute; width: 12px; height: 12px; z-index: 2; pointer-events: none; }
.tr { right: 1px; top: 1px; }
.bl { left: 0; bottom: 0; transform: rotate(180deg); }

.editor { display: flex; align-items: center; justify-content: space-between; flex: none; width: 30px; height: 20px; padding: 0 2px 0 4px; border: 1px solid #464a56; border-radius: 5px; background: linear-gradient(#5a606d, #616776); }
.mode { width: 76px; gap: 3px; }
.menus { display: flex; gap: 20px; margin: 0 7px; color: #d4d6dc; }
.info .menus { margin: 0 7px 0 5px; }
.group { display: flex; flex: none; height: 20px; border: 1px solid #24262c; border-radius: 5px; overflow: hidden; }
.tool { display: flex; align-items: center; justify-content: center; flex: none; width: 18px; height: 18px; color: #000; background: linear-gradient(#989ba8, #868996); }
.group .tool + .tool { border-left: 1px solid #24262c; width: 20px; }
.tool.on { background: linear-gradient(#7390b3, #86a5cb); }
.off .i { opacity: .6; }
.wide .tool, .wide .tool + .tool { flex: 1; width: auto; }
.wide .tool span { flex: 1; text-align: center; }
.wide .i { margin-left: 2px; }

.idbox, .presets, .display, .opacity, .keying { display: flex; align-items: center; }
.idbox .tool, .presets .tool, .display .tool, .opacity .tool, .keying .tool { height: 20px; width: 20px; border: 1px solid #24262c; border-right-width: 0; }
.idbox .tool:last-child, .presets .last, .display .last, .opacity .last, .keying .last { width: 21px; border-right-width: 1px; border-radius: 0 5px 5px 0; }
.idbox input { width: 119px; height: 20px; padding: 0 7px; color: #000; background: linear-gradient(#a0a3b1, #b0b3c2); }
.idbox .editor { width: 31px; border-radius: 5px 0 0 5px; }
.dd { display: grid; grid-template-columns: 1fr auto; align-items: center; height: 20px; min-width: 0; border: 1px solid #42454f; border-radius: 4px; background: linear-gradient(#545966, #656b7a); color: #fff; }
.dd select { grid-area: 1 / 1 / 2 / 3; width: 100%; height: 18px; padding-left: 7px; opacity: 1; }
.dd .ud { grid-area: 1 / 2; margin-right: 2px; }
.dd.joined { flex: 1; border-right: 0; border-radius: 4px 0 0 4px; }
.engine { width: 110px; margin-left: 10px; }
.stats { display: flex; align-items: center; gap: 10px; margin-left: 12px; color: #d4d6dc; }

.upper { display: grid; grid-template-columns: 337fr 554fr 635fr; gap: 1px; min-height: 0; }
.props { display: flex; flex-direction: column; background: #656874; overflow: hidden; }
.scroller { flex: 1; min-height: 0; display: flex; border-top: 1px solid #787b86; }
.panels { flex: 1; min-width: 0; }
.props .scroller .panels { contain: size; overflow: hidden; }
.tabs { margin-left: 1px; }
.context { display: flex; align-items: center; gap: 5px; height: 35px; padding-left: 10px; color: #000; }
h2 { display: flex; align-items: center; gap: 3px; height: 24px; padding: 0 10px 0 12px; font-size: 12px; color: #fff; background: #5a5d69; border-top: 1px solid #50535d; }
.tri { width: 10px; height: 10px; color: #c8cad0; }
.grip { width: 12px; height: 6px; margin-left: auto; }
.body { padding: 9px 8px; }
.body + h2 { margin-top: -2px; }
.display { margin-top: 5px; }
.display label { width: 105px; padding-left: 8px; color: #dcdde2; }
.dims { padding-bottom: 9px; }
.presets { margin-bottom: 5px; }
.cols { display: flex; gap: 8px; }
.col { flex: 1; min-width: 0; }
.col p { padding-left: 8px; color: #dcdde2; }
.gap { display: grid; gap: 2px; }
.stack { border: 1px solid #44464f; border-radius: 9px; overflow: hidden; background: linear-gradient(#868996, #9497a5); color: #000; }
.num { position: relative; display: flex; align-items: center; height: 19px; padding: 0 15px; }
.num + .num { border-top: 1px solid #44464f; height: 20px; }
.col .num { height: 19px; }
.num::before, .num::after { content: ""; position: absolute; top: 6px; border: 3px solid transparent; }
.num::before { left: 3px; border-right: 4px solid #666975; }
.num::after { right: 3px; border-left: 4px solid #666975; }
.num input { flex: 1; width: 20px; text-align: right; }
.num input, .opacity input { font-family: "DejaVu Sans", sans-serif; }
.slider { background: linear-gradient(#8f9090, #b0b0a8); }
.slider::before, .slider::after { display: none; }
.pair { display: flex; height: 20px; }
.pair .num { flex: 1; height: 18px; }
.pair .num + .num { border-top: 0; border-left: 1px solid #44464f; height: 18px; }
.checks { display: flex; gap: 23px; padding: 3px 3px 0; }
.check { display: flex; align-items: center; gap: 8px; color: #d4d6dc; }
.check input, .cut, .aa { appearance: none; width: 14px; height: 14px; flex: none; border: 1px solid #50534f; border-radius: 3px; background: linear-gradient(#b4b5b0, #cbccc4); }
.dim { opacity: .5; }
.aa { background: linear-gradient(#74756f, #8c8d85); position: relative; margin: 0 2px 0 0; }
.aa::after { content: ""; position: absolute; left: 4px; top: -2px; width: 5px; height: 10px; border: solid #fff; border-width: 0 2px 2px 0; transform: rotate(40deg); }
.track { width: 12px; margin: 4px 5px 4px 1px; border: 1px solid #575a65; border-radius: 6px; background: #5e616c; }
.thumb { height: 54%; margin: -1px; border: 1px solid #4c4f63; border-radius: 6px; background: linear-gradient(90deg, #777b92, #8b8fa8); }

.graph, .sequencer, .preview { display: flex; flex-direction: column; }
.graphmain, .seqmain { position: relative; flex: 1; display: flex; min-height: 0; }
.channels { flex: 241 1 0; min-width: 0; padding-top: 6px; background: #6d707d; border-right: 1px solid #5b5d68; white-space: nowrap; overflow: hidden; }
.ch { display: flex; align-items: center; height: 18px; gap: 1px; color: #000; }
.ch.scene { padding-left: 2px; background: #54636e; }
.ch.scene .i:last-of-type { margin-right: 3px; }
.ch.act { margin-left: 7px; padding-left: 2px; background: #7b8995; }
.ch.act .i { margin: 0 3px 0 0; }
.ch.curve { padding-left: 13px; color: #fff; gap: 3px; }
.swatch { background: #f8636a; height: 18px; padding-top: 1px; }
.name { flex: 1; }
.tree { width: 12px; height: 10px; margin-right: 3px; }
.vruler { background: #80828a; padding: 3px 1px 3px 4px; color: #000; }
.graph .vruler { width: 17px; padding-bottom: 21px; border-right: 0; }
.pill { display: flex; border: 1px solid #5f6278; border-radius: 7px; font: 11px/12px "DejaVu Sans", sans-serif; }
.vruler .pill { flex-direction: column; width: 12px; height: 100%; background: radial-gradient(circle at 5px 6px, #5c6080 4px, transparent 5px), radial-gradient(circle at 5px calc(100% - 6px), #5c6080 4px, transparent 5px), linear-gradient(90deg, #7b7f94, #888ba0); }
.vruler span { flex: 1; display: flex; justify-content: center; align-items: center; writing-mode: vertical-rl; transform: rotate(180deg); }
.graph .vruler .pill { padding: 22px 0 6px; }
.plotcol { flex: 297 1 0; min-width: 0; display: flex; flex-direction: column; }
.plot { position: relative; flex: 1; background: #7e8089; overflow: hidden; }
.grid { position: absolute; inset: 0; width: 100%; height: 100%; shape-rendering: crispEdges; }
.grid path { vector-effect: non-scaling-stroke; }
.minor { stroke: #70728a; }
.major { stroke: #5d5f7a; }
.zero { stroke: #3f9a34; stroke-width: 2; }
.fc { stroke: #ec6f73; stroke-width: 2; }
.now { stroke: #62c441; stroke-width: 2; }
.frame { position: absolute; left: 38%; bottom: 0; width: 32px; line-height: 15px; text-align: center; font-family: "DejaVu Sans", sans-serif; background: #5dc63b; color: #000; }
.expand { position: absolute; right: 2px; top: 22px; width: 14px; height: 14px; line-height: 0; border-radius: 4px; background: #62646c; }
.hruler { background: #80828a; color: #000; padding: 1px 5px 4px; }
.hruler .pill { height: 12px; line-height: 10px; background: radial-gradient(circle at 6px 5px, #5c6080 4px, transparent 5px), radial-gradient(circle at calc(100% - 6px) 5px, #5c6080 4px, transparent 5px), linear-gradient(#7b7f94, #888ba0); }
.hruler span { flex: 1; width: 0; white-space: nowrap; display: flex; justify-content: center; }
.graph .hruler .pill { padding: 0 42px 0 28px; }
.filters { width: 68px; gap: 12px; }
.graph .bar { gap: 6px; padding: 0 0 0 8px; }
.graph .menus { margin: 0 10px 0 8px; }

.preview { background: #000; }
.canvas { position: relative; flex: 1; display: flex; justify-content: center; padding-top: 52px; }
.checker { width: 60.3%; margin-bottom: 53px; border: 1px dashed #aaa; background: conic-gradient(#2b2b2b 25%, #343434 0 50%, #2b2b2b 0 75%, #343434 0) 0 0 / 16px 16px; }
.preview .expand { background: none; }
.channel { width: 131px; height: 20px; border-radius: 10px; }
.preview .menus { margin: 0 9px 0 7px; }
.preview .bar { gap: 6px; }

.sequencer .vruler { width: 22px; padding: 2px 4px 6px; }
.sequencer .vruler .pill { width: 13px; height: calc(100% - 16px); padding-bottom: 4px; }
.sequencer .plotcol { flex: 1286 1 0; }
.sequencer .plot { background: #7b7d85; }
.secs { stroke: #a0a2a9; }
.rows { stroke: #44464d; }
.strips { position: absolute; left: 0; right: 0; top: 77.5%; display: grid; grid-template-columns: 335fr 951fr; height: 23px; }
.strip { display: flex; align-items: center; min-width: 0; overflow: hidden; white-space: nowrap; }
.image { padding-left: 18px; color: #fff; border: 1px solid #fff; background: linear-gradient(90deg, #543a62 14px, #44265a 14px calc(100% - 12px), #543a62 calc(100% - 12px)); }
.movie { gap: 20px; padding-left: 10px; color: #000; border: solid #111; border-width: 1px 0; background: linear-gradient(#5578a4, #44608a); }
.movie svg { width: 10px; height: 10px; flex: none; }
.playhead { position: absolute; left: 26%; top: 0; bottom: 0; width: 2px; background: #62c441; }
.playhead .frame { left: 0; width: 41px; }
.sequencer .hruler { padding: 2px 10px 3px 0; border-bottom: 1px solid #a5a6ae; background: #85878e; }
.sequencer .hruler .pill { padding-left: 24px; border-color: #74767f; background: linear-gradient(90deg, #7c809a 143px, #80828b 143px); }
.sequencer .expand { top: 2px; right: 22px; }
.side { flex: 221 1 0; min-width: 0; display: flex; background: #656874; color: #000; }
.side .panels { contain: size; overflow: hidden; }
.side h2 { color: #000; height: 23px; }
.side .tri { color: #1c1d22; }
.fields { display: grid; grid-template-columns: 54px 1fr; gap: 5px 0; padding: 10px 6px 0 16px; }
.text { height: 20px; padding: 0 7px; border: 1px solid #777a86; border-radius: 4px; background: linear-gradient(#a3a6b4, #b4b7c5); }
.opacity, .fields .stack { grid-column: 1 / 3; }
.fields .stack { margin-bottom: -3px; }
.fields .num { height: 18px; }
.opacity input { flex: 1; height: 20px; padding-right: 14px; text-align: right; border: 1px solid #44464f; border-right: 0; border-radius: 9px 0 0 9px; background: #8cbf6c; }
.facts { padding: 9px 0 0 16px; white-space: nowrap; }
.facts .skip { margin-top: 20px; }
.side .track { margin: 3px 5px 14px 2px; }
.side .thumb { height: 31%; }
.refresh { margin: 0 3px 0 10px; }
.refresh .tool { width: 120px; }
.sequencer .last { margin-left: 6px; }
.opacity .last.tool { margin-left: 0; }
.sequencer .bar, .timeline .bar { gap: 6px; }
.sequencer .menus, .timeline .menus { margin: 0 9px 0 7px; }

.timeline .plot { height: 47px; background: #3c3e46; border-top: 1px solid #555862; }
.half { stroke: #404270; opacity: .15; }
.full { stroke: #383a64; opacity: .4; }
.timeline .now { stroke-width: 3; }
.timeline .hruler { padding: 2px 2px 3px 4px; }
.timeline .hruler .pill { padding: 0 27px 0 4px; }
.timeline .bar { height: 27px; background: linear-gradient(#565862, #4b4d57); }
.range { width: 226px; }
.current { width: 91px; height: 20px; }
.transport { margin-left: 9px; }
.sync { width: 114px; }
.record { margin: 0 0 0 9px; }
.keying { position: relative; }
.keying > .i { position: absolute; left: 2px; width: 20px; }
.keying input { width: 129px; height: 20px; border-radius: 5px 0 0 5px; background: linear-gradient(#a0a3b1, #b0b3c2); }

.popup { position: absolute; z-index: 5; right: 128px; top: 576px; width: 172px; padding: 6px 0 3px; border: 1px solid #1e1f23; border-radius: 5px; background: rgba(55, 56, 63, .93); box-shadow: 0 2px 6px rgba(0, 0, 0, .5); color: #dcdde0; }
.popup p { padding-left: 8px; }
.popup button { display: block; width: 100%; height: 20px; padding-left: 30px; text-align: left; white-space: nowrap; }
.popup .active { color: #000; background: #65a3bd; }
.popup button:disabled { color: #717278; }
.popup hr { margin: 4px 0; border: 0; border-top: 1px solid #4e5057; }
.popup u { text-underline-offset: 2px; }
```
